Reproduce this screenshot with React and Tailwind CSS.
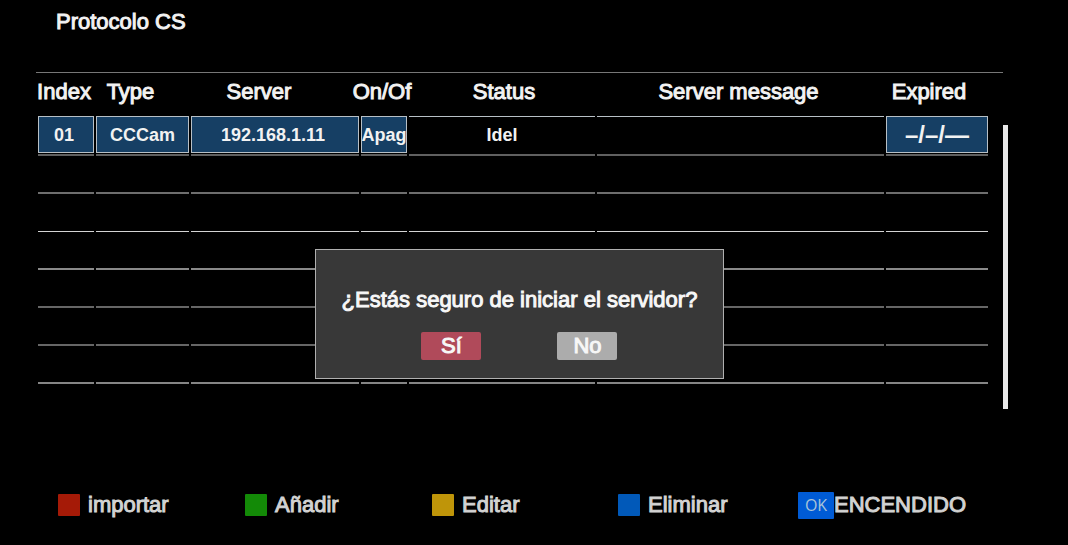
const columns = [
  { label: "Index", width: "w-[56px]", shift: "pr-1" },
  { label: "Type", width: "w-[93px]", shift: "pr-6" },
  { label: "Server", width: "w-[168px]", shift: "pr-8" },
  { label: "On/Of", width: "w-[46px]", shift: "pr-1" },
  { label: "Status", width: "w-[186px]", shift: "pl-1" },
  { label: "Server message", width: "w-auto", shift: "pr-1" },
  { label: "Expired", width: "w-[102px]", shift: "pr-4" },
];

const selected = "border bg-[#163f64]";
const plain = "border-t";

const server = [
  { text: "01", style: selected, size: "text-lg pr-1" },
  { text: "CCCam", style: selected, size: "text-lg" },
  { text: "192.168.1.11", style: selected, size: "text-lg pr-1" },
  { text: "Apag", style: selected, size: "text-lg" },
  { text: "Idel", style: plain, size: "text-lg" },
  { text: "", style: plain, size: "text-lg" },
  { text: "–/–/—", style: selected, size: "text-2xl" },
];

const emptyRows = [
  "border-b-2 border-[#6e6e6e]",
  "border-b border-[#d4d4d4]",
  "border-b-2 border-[#8a8a8a]",
  "border-b-2 border-[#666666]",
  "border-b-2 border-[#666666]",
  "border-b-2 border-[#858585]",
];

const actions = [
  { label: "importar", color: "bg-[#a51a07]" },
  { label: "Añadir", color: "bg-[#138a07]" },
  { label: "Editar", color: "bg-[#bf9509]" },
  { label: "Eliminar", color: "bg-[#0159b9]" },
];

export default function App() {
  return (
    <div className="flex min-h-screen flex-col bg-black font-['Liberation_Sans',Arial,sans-serif] text-[22px] leading-7 text-[#f2f2f2] [-webkit-text-stroke:1px_currentColor]">
      <h1 className="px-14 pt-2">Protocolo CS</h1>

      <main className="relative mt-9 pr-[60px] pl-9">
        <div className="mr-[5px] h-px bg-[#777777]" />
        <div className="flex gap-[13px]">
          <table className="w-full min-w-0 flex-1 table-fixed border-separate border-spacing-x-[2px] border-spacing-y-0">
            <thead>
              <tr className="h-[43px]">
                {columns.map((c) => (
                  <th key={c.label} scope="col" className={`p-0 align-middle font-normal ${c.width}`}>
                    <div className={`flex justify-center whitespace-nowrap pb-[6px] ${c.shift}`}>
                      <span>{c.label}</span>
                    </div>
                  </th>
                ))}
              </tr>
            </thead>
            <tbody>
              <tr>
                {server.map((c, i) => (
                  <td key={i} className="h-10 border-b-2 border-[#606060] p-0 align-top">
                    <div
                      className={`flex h-[37px] items-center justify-center overflow-hidden border-[#b8c0c6] font-bold whitespace-nowrap [-webkit-text-stroke:0] ${c.style} ${c.size}`}
                    >
                      {c.text}
                    </div>
                  </td>
                ))}
              </tr>
              {emptyRows.map((line, r) => (
                <tr key={r}>
                  {columns.map((c) => (
                    <td key={c.label} className={`h-[38px] p-0 ${line}`} />
                  ))}
                </tr>
              ))}
            </tbody>
          </table>
          <div className="mt-[52px] -mb-[25px] w-[5px] bg-[#e8e8e8]" />
        </div>

        <div className="absolute inset-0 flex items-start justify-center pt-[177px] pr-[65px] pl-9">
          <section
            role="dialog"
            aria-labelledby="question"
            className="border border-[#b0b0b0] bg-[#383838] px-[26px] pt-9 pb-[18px] text-[#f7f7f7]"
          >
            <p id="question" className="text-center">
              ¿Estás seguro de iniciar el servidor?
            </p>
            <div className="mt-[18px] flex justify-center gap-[76px]">
              <button type="button" className="h-7 w-[60px] rounded-xs bg-[#b04a5a]">
                Sí
              </button>
              <button type="button" className="h-7 w-[60px] rounded-xs bg-[#acacac]">
                No
              </button>
            </div>
          </section>
        </div>
      </main>

      <footer className="mt-auto grid grid-cols-[187fr_187fr_186fr_180fr_270fr] items-center pb-[26px] pl-[58px] text-[#d2d2d2]">
        {actions.map((a) => (
          <button key={a.label} type="button" className="flex items-center gap-2">
            <span className={`size-[22px] rounded-[1px] ${a.color}`} />
            {a.label}
          </button>
        ))}
        <button type="button" className="flex items-center">
          <span className="flex h-[27px] w-9 items-center justify-center rounded-[1px] bg-[#005bd5] font-['Open_Sans',sans-serif] text-base text-[#a9c4d8] [-webkit-text-stroke:0]">
            OK
          </span>
          ENCENDIDO
        </button>
      </footer>
    </div>
  );
}
